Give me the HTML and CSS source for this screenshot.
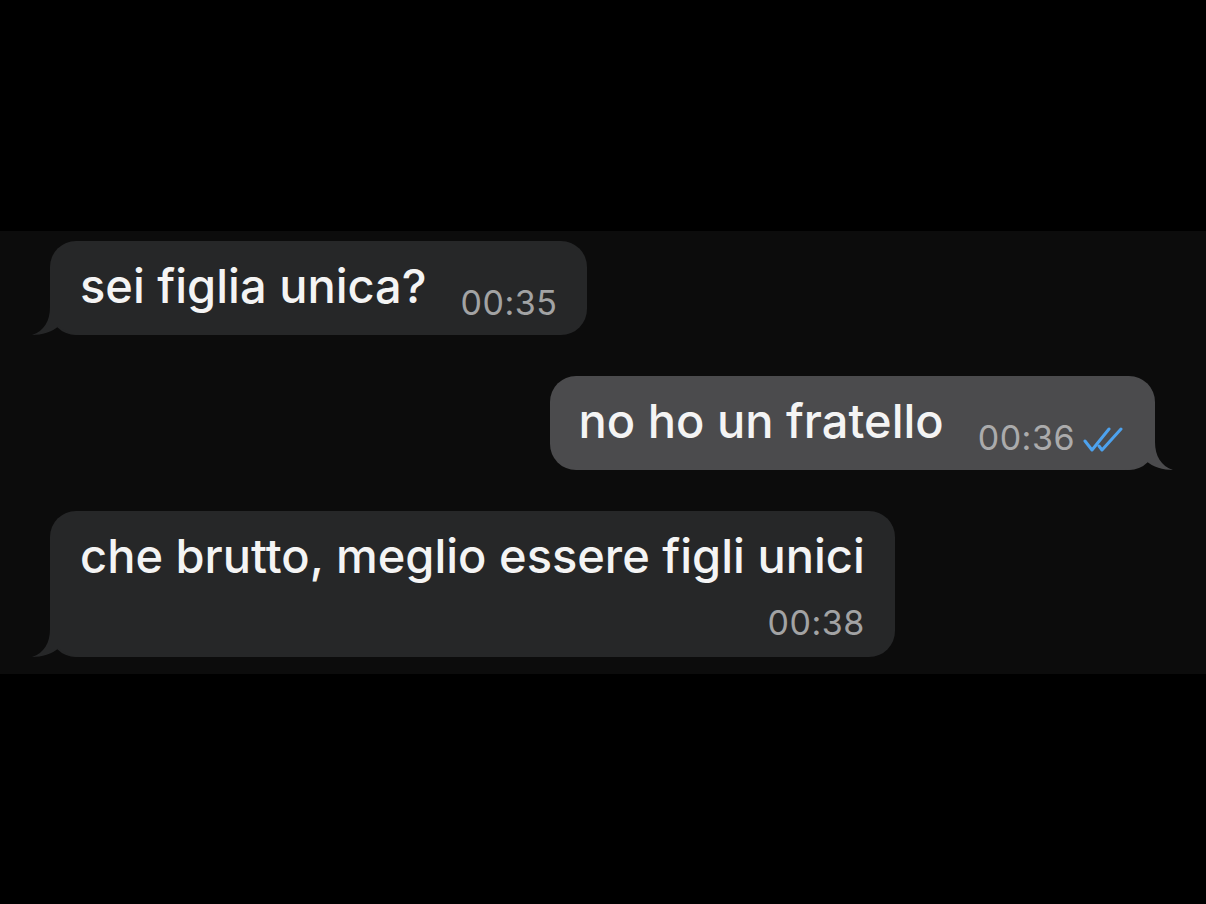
FILE: index.html
```html
<!DOCTYPE html>
<html lang="it">
<head>
<meta charset="utf-8">
<title>Chat</title>
<link rel="stylesheet" href="styles.css">
</head>
<body>
<main class="page">
  <section class="chat">
    <div class="bubble in">
      <span class="text">sei figlia unica?</span>
      <span class="meta">00:35</span>
      <svg class="tail" viewBox="0 0 48 44" aria-hidden="true"><path d="M18 0 L18 16 C18 30 12 40 0 44 C10 44 20 41 27 35 C32 40 38 44 48 44 L48 0 Z"/></svg>
    </div>
    <div class="bubble out">
      <span class="text">no ho un fratello</span>
      <span class="meta">00:36
        <svg class="checks" viewBox="0 0 42 26" aria-hidden="true"><path d="M2 14 L9 23 L26 2"/><path d="M16 19 L19 23 L38 2"/></svg>
      </span>
      <svg class="tail" viewBox="0 0 48 44" aria-hidden="true"><path d="M18 0 L18 16 C18 30 12 40 0 44 C10 44 20 41 27 35 C32 40 38 44 48 44 L48 0 Z"/></svg>
    </div>
    <div class="bubble in stacked">
      <span class="text">che brutto, meglio essere figli unici</span>
      <span class="meta">00:38</span>
      <svg class="tail" viewBox="0 0 48 44" aria-hidden="true"><path d="M18 0 L18 16 C18 30 12 40 0 44 C10 44 20 41 27 35 C32 40 38 44 48 44 L48 0 Z"/></svg>
    </div>
  </section>
</main>
</body>
</html>
```
FILE: styles.css
```css
html, body {
  margin: 0;
  padding: 0;
  background: #000;
}
body {
  font-family: "Inter", "Liberation Sans", sans-serif;
  width: 1206px;
  height: 904px;
  overflow: hidden;
}
.page {
  padding-top: 231px;
}
.chat {
  background: #0c0c0c;
  padding: 10px 51px 17px 50px;
  display: flex;
  flex-direction: column;
  align-items: flex-start;
  gap: 41px;
}
.bubble {
  position: relative;
  display: flex;
  align-items: flex-end;
  gap: 34px;
  padding: 18px 30px 22px 30px;
  border-radius: 26px;
  color: #f4f4f4;
}
.bubble.in {
  background: #262728;
}
.bubble.in .tail {
  fill: #262728;
  left: -18px;
}
.bubble.out {
  background: #4b4b4d;
  align-self: flex-end;
  padding-left: 29px;
}
.bubble.out .tail {
  fill: #4b4b4d;
  right: -18px;
  transform: scaleX(-1);
}
.tail {
  position: absolute;
  bottom: 0;
  width: 48px;
  height: 44px;
}
.text {
  font-size: 47px;
  line-height: 54px;
  font-weight: 500;
  position: relative;
  z-index: 1;
  white-space: nowrap;
}
.meta {
  font-size: 34px;
  line-height: 40px;
  color: #a2a3a4;
  margin-bottom: -10px;
  letter-spacing: 0.5px;
  display: flex;
  align-items: center;
  gap: 8px;
  position: relative;
  z-index: 1;
}
.bubble.out .meta {
  color: #ababac;
}
.checks {
  width: 42px;
  height: 26px;
  fill: none;
  stroke: #4da2ee;
  stroke-width: 3;
  stroke-linecap: round;
  stroke-linejoin: round;
  margin-top: 4px;
}
.bubble.stacked {
  flex-direction: column;
  gap: 20px;
  padding-right: 30px;
}
.bubble.stacked .meta {
  margin-bottom: -8px;
}
```
